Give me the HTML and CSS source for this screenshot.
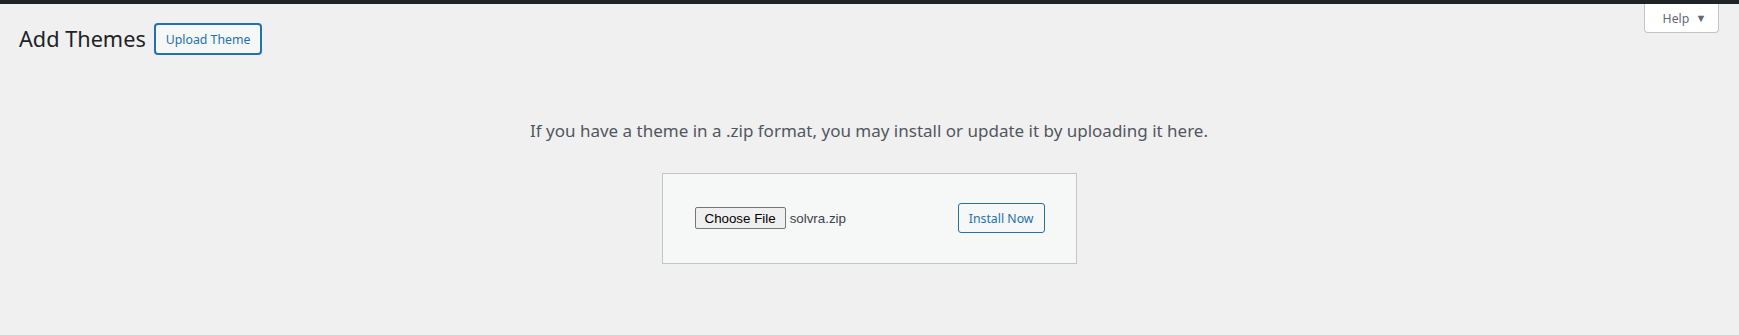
FILE: index.html
```html
<!DOCTYPE html>
<html lang="en">
<head>
    <meta charset="UTF-8">
    <meta name="viewport" content="width=device-width, initial-scale=1.0">
    <title>Add Themes</title>
    <link rel="stylesheet" href="styles.css">
</head>
<body>
    <!-- Admin Bar -->
    <div id="admin-bar"></div>

    <!-- Help Tab -->
    <div id="screen-meta-links">
        <button class="help-tab">Help <span class="arrow">&#9660;</span></button>
    </div>

    <div class="wrap">
        <div class="title-row">
            <h1>Add Themes</h1>
            <button class="title-action">Upload Theme</button>
        </div>

        <!-- Upload Form -->
        <div class="upload-theme">
            <p class="install-help">If you have a theme in a .zip format, you may install or update it by uploading it here.</p>
            <form class="upload-form">
                <div class="file-field">
                    <button type="button" class="choose-file">Choose File</button>
                    <span class="file-name">solvra.zip</span>
                </div>
                <button type="button" class="install-button">Install Now</button>
            </form>
        </div>
    </div>
</body>
</html>
```

FILE: styles.css
```css
/* Base Styles */
body {
    margin: 0;
    background-color: #f0f0f1;
    color: #1d2327;
    font-family: "Segoe UI", "Noto Sans", sans-serif;
    font-size: 12.3px;
}
#admin-bar {
    height: 4px;
    background-color: #1d2327;
}
/* Help Tab Styles */
#screen-meta-links {
    float: right;
    margin-right: 20px;
}
.help-tab {
    width: 75px;
    height: 29px;
    padding: 0 0 0 6px;
    background: #fff;
    border: 1px solid #c3c4c7;
    border-top: none;
    border-radius: 0 0 4px 4px;
    color: #646970;
    font-family: inherit;
    font-size: 12.3px;
    cursor: pointer;
}
.help-tab .arrow {
    font-size: 11px;
    margin-left: 3px;
    position: relative;
    top: -1px;
}
/* Title Row Styles */
.wrap {
    padding: 19px 20px 0 19px;
}
.title-row {
    display: flex;
    align-items: center;
    gap: 8px;
}
.title-row h1 {
    margin: 0;
    font-size: 21.7px;
    font-weight: 400;
    line-height: 1.3;
}
.title-action {
    height: 32px;
    padding: 0 10px;
    background: #f6f7f7;
    border: 2px solid #2271b1;
    border-radius: 4px;
    color: #2271b1;
    font-family: inherit;
    font-size: 12.3px;
    cursor: pointer;
}
/* Upload Box Styles */
.upload-theme {
    text-align: center;
}
.install-help {
    margin: 0;
    padding-top: 64px;
    color: #50575e;
    font-size: 17px;
    line-height: 1.4;
}
.upload-form {
    display: flex;
    align-items: center;
    justify-content: space-between;
    box-sizing: border-box;
    width: 415px;
    height: 91px;
    margin: 30px auto 0;
    padding: 0 31px 0 32px;
    background: #f6f7f7;
    border: 1px solid #c3c4c7;
}
.file-field {
    display: flex;
    align-items: center;
    gap: 4px;
}
.choose-file {
    height: 22px;
    padding: 0 9px;
    background: #efefef;
    border: 1px solid #767676;
    border-radius: 2px;
    color: #000;
    font-family: "Liberation Sans", Arial, sans-serif;
    font-size: 13.33px;
}
.file-name {
    color: #3c434a;
    font-family: "Liberation Sans", Arial, sans-serif;
    font-size: 13.33px;
}
.install-button {
    height: 30px;
    padding: 0 10px;
    background: #f6f7f7;
    border: 1px solid #2271b1;
    border-radius: 3px;
    color: #2271b1;
    font-family: inherit;
    font-size: 12.3px;
    cursor: pointer;
}
```
